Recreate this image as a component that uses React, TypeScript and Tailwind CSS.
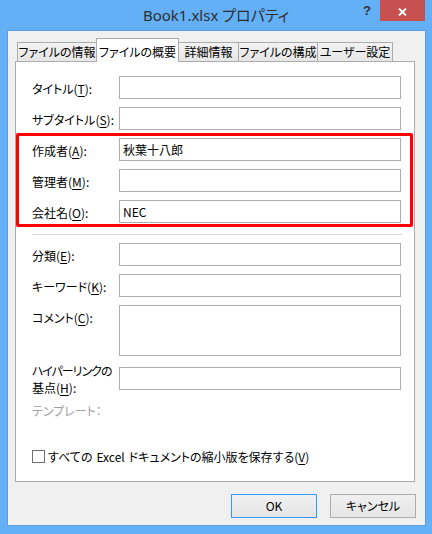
import React from "react";

const Key = ({ text, k }: { text: string; k: string }) => (
  <span className="whitespace-nowrap">
    {text}(<span className="underline underline-offset-2">{k}</span>):
  </span>
);

const Field = ({ text, k, value, tall }: { text: string; k: string; value?: string; tall?: boolean }) => (
  <div className="flex items-start">
    <div className="w-[87px] h-[23px] flex items-center pt-[2px]">
      <Key text={text} k={k} />
    </div>
    <div
      className={`w-[282px] ${tall ? "h-[51px] items-start pt-[3px]" : "h-[23px] items-center"} flex border border-[#abadb3] bg-white px-[3px]`}
    >
      {value}
    </div>
  </div>
);

const tabs = [
  { label: "ファイルの情報", w: "w-[80px]" },
  { label: "ファイルの概要", w: "w-[83px]", active: true },
  { label: "詳細情報", w: "w-[61px]" },
  { label: "ファイルの構成", w: "w-[80px]" },
  { label: "ユーザー設定", w: "w-[76px]" },
];

export default function App() {
  return (
    <div className="w-[432px] h-[534px] bg-[#63b0f6] flex flex-col font-['Noto_Sans_CJK_JP',sans-serif] [font-feature-settings:'palt'] text-[12px] text-black">
      {/* title bar */}
      <div className="relative h-[30px] flex items-center justify-center">
        <span className="font-['Noto_Sans','Noto_Sans_CJK_JP',sans-serif] text-[15px] text-[#2e2e2e] pt-[1px]">
          Book1.xlsx プロパティ
        </span>
        <div className="absolute right-[7px] top-0 flex">
          <div className="w-[26px] h-[21px] flex items-center justify-center font-['Liberation_Sans',sans-serif] font-bold text-[13px] text-[#333]">
            ?
          </div>
          <div className="w-[45px] h-[21px] bg-[#c75050] flex items-center justify-center pt-[3px]">
            <svg width="9" height="8" viewBox="0 0 9 8">
              <path d="M1 0.5 L8 7.5 M8 0.5 L1 7.5" stroke="#fff" strokeWidth="1.8" />
            </svg>
          </div>
        </div>
      </div>

      {/* client */}
      <div className="ml-[7px] w-[419px] h-[496px] border border-[#5a9de2] bg-[#f0f0f0] flex flex-col">
        {/* tabs */}
        <div className="ml-[9px] mt-[7px] h-[23px] flex items-end">
          {tabs.map((t, i) => (
            <div
              key={t.label}
              className={`${t.w} ${i > 0 ? "-ml-px" : ""} ${
                t.active
                  ? "h-[24px] -mb-px bg-white z-10 pt-[2px]"
                  : "h-[19px] bg-[#ececec] bg-gradient-to-b from-[#f2f2f2] to-[#e6e6e6]"
              } border border-b-0 border-[#acacac] flex items-center justify-center whitespace-nowrap`}
            >
              {t.label}
            </div>
          ))}
        </div>

        {/* panel */}
        <div className="ml-[7px] w-[400px] h-[421px] border border-[#acacac] bg-white pl-[16px] pt-[14px] flex flex-col">
          <div className="flex flex-col gap-[8px]">
            <Field text="タイトル" k="T" />
            <Field text="サブタイトル" k="S" />
          </div>

          <div className="-ml-[16px] w-[397px] mt-[3px] border-[3px] border-[#ff0000] rounded-[2px] pl-[13px] pt-[2px] pb-[1px] flex flex-col gap-[8px]">
            <Field text="作成者" k="A" value="秋葉十八郎" />
            <Field text="管理者" k="M" />
            <Field text="会社名" k="O" value="NEC" />
          </div>

          <div className="mt-[7px] w-[370px] h-px bg-[#d9d9d9]" />

          <div className="mt-[8px] flex flex-col gap-[8px]">
            <Field text="分類" k="E" />
            <Field text="キーワード" k="K" />
            <Field text="コメント" k="C" tall />
          </div>

          <div className="mt-[11px] h-[23px] flex items-center">
            <div className="w-[87px] h-[23px] flex flex-col justify-center pt-[1px] leading-[17px] whitespace-nowrap">
              <div className="tracking-[-1px]">ハイパーリンクの</div>
              <div>
                <Key text="基点" k="H" />
              </div>
            </div>
            <div className="w-[282px] h-[23px] border border-[#abadb3] bg-white" />
          </div>

          <div className="mt-[13px] leading-[15px] text-[#a0a0a0]">テンプレート：</div>

          <div className="mt-[32px] h-[13px] flex items-center gap-[3px]">
            <div className="w-[13px] h-[13px] border border-[#707070] bg-white" />
            <span className="whitespace-nowrap">
              すべての<span className="ml-[4px]">Excel</span>
              <span className="ml-[4px]">ドキュメントの縮小版を保存する(</span>
              <span className="underline underline-offset-2">V</span>)
            </span>
          </div>
        </div>

        {/* buttons */}
        <div className="mt-[12px] mr-[9px] flex justify-end gap-[13px]">
          <button className="w-[86px] h-[24px] border border-[#3399ff] bg-gradient-to-b from-[#f0f0f0] to-[#e5e5e5] flex items-center justify-center">
            OK
          </button>
          <button className="w-[86px] h-[24px] border border-[#acacac] bg-gradient-to-b from-[#f0f0f0] to-[#e5e5e5] flex items-center justify-center">
            キャンセル
          </button>
        </div>
      </div>
    </div>
  );
}
